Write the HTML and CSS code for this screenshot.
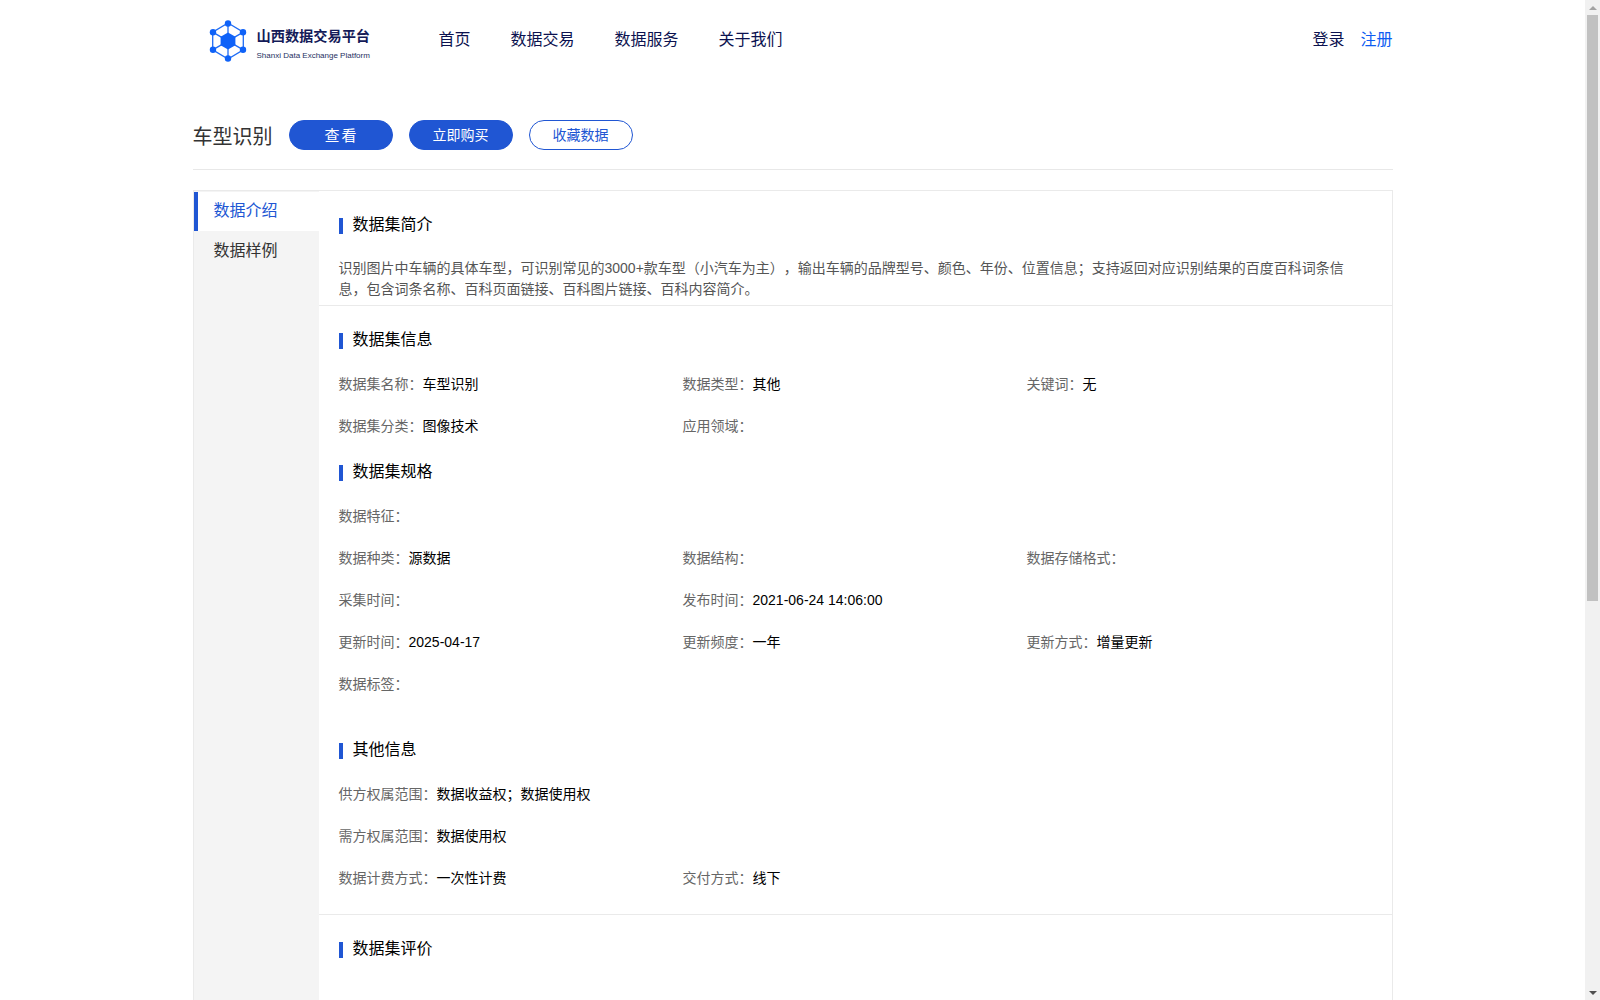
FILE: index.html
```html
<!DOCTYPE html>
<html lang="zh-CN">
<head>
<meta charset="utf-8">
<title>车型识别 - 山西数据交易平台</title>
<link rel="stylesheet" href="styles.css">
</head>
<body>
<div class="viewport">
<div class="page">
  <header class="topbar">
    <a class="logo">
      <svg class="logo-mark" viewBox="0 0 40 44" width="40" height="44" aria-hidden="true">
        <g fill="none" stroke="#1f6cf5" stroke-width="1.3">
          <path d="M20 4 L35.3 13.1 V30.9 L20 40 L4.7 30.9 V13.1 Z"/>
          <path d="M20 4 V40 M4.7 13.1 L35.3 30.9 M35.3 13.1 L4.7 30.9"/>
        </g>
        <g fill="#0f62f8">
          <path d="M20 13.5 L27.4 17.8 V26.2 L20 30.5 L12.6 26.2 V17.8 Z"/>
          <circle cx="20" cy="4.5" r="3.2"/>
          <circle cx="35" cy="13.2" r="3.2"/>
          <circle cx="35" cy="30.8" r="3.2"/>
          <circle cx="20" cy="39.5" r="3.2"/>
          <circle cx="5" cy="30.8" r="3.2"/>
          <circle cx="5" cy="13.2" r="3.2"/>
        </g>
      </svg>
      <span class="logo-text">
        <strong class="logo-cn">山西数据交易平台</strong>
        <span class="logo-en">Shanxi Data Exchange Platform</span>
      </span>
    </a>
    <nav class="nav">
      <a>首页</a>
      <a>数据交易</a>
      <a>数据服务</a>
      <a>关于我们</a>
    </nav>
    <div class="auth">
      <a>登录</a>
      <a class="auth-reg">注册</a>
    </div>
  </header>

  <div class="title-row">
    <h1 class="title">车型识别</h1>
    <button class="btn btn-fill btn-view">查看</button>
    <button class="btn btn-fill">立即购买</button>
    <button class="btn btn-line">收藏数据</button>
  </div>

  <div class="panel">
    <aside class="side">
      <a class="side-item active">数据介绍</a>
      <a class="side-item">数据样例</a>
    </aside>
    <main class="content">
      <section class="sec">
        <h2 class="sec-title">数据集简介</h2>
        <p class="intro">识别图片中车辆的具体车型，可识别常见的3000+款车型（小汽车为主），输出车辆的品牌型号、颜色、年份、位置信息；支持返回对应识别结果的百度百科词条信息，包含词条名称、百科页面链接、百科图片链接、百科内容简介。</p>
      </section>

      <section class="sec sec-info">
        <h2 class="sec-title">数据集信息</h2>
        <div class="grid">
          <div class="cell"><span class="k">数据集名称：</span>车型识别</div>
          <div class="cell"><span class="k">数据类型：</span>其他</div>
          <div class="cell"><span class="k">关键词：</span>无</div>
          <div class="cell"><span class="k">数据集分类：</span>图像技术</div>
          <div class="cell"><span class="k">应用领域：</span></div>
        </div>

        <h2 class="sec-title sec-title-next">数据集规格</h2>
        <div class="grid">
          <div class="cell cell-full"><span class="k">数据特征：</span></div>
          <div class="cell"><span class="k">数据种类：</span>源数据</div>
          <div class="cell"><span class="k">数据结构：</span></div>
          <div class="cell"><span class="k">数据存储格式：</span></div>
          <div class="cell"><span class="k">采集时间：</span></div>
          <div class="cell"><span class="k">发布时间：</span>2021-06-24 14:06:00</div>
          <div class="cell"></div>
          <div class="cell"><span class="k">更新时间：</span>2025-04-17</div>
          <div class="cell"><span class="k">更新频度：</span>一年</div>
          <div class="cell"><span class="k">更新方式：</span>增量更新</div>
          <div class="cell cell-full"><span class="k">数据标签：</span></div>
        </div>

        <h2 class="sec-title sec-title-other">其他信息</h2>
        <div class="grid">
          <div class="cell cell-full"><span class="k">供方权属范围：</span>数据收益权；数据使用权</div>
          <div class="cell cell-full"><span class="k">需方权属范围：</span>数据使用权</div>
          <div class="cell"><span class="k">数据计费方式：</span>一次性计费</div>
          <div class="cell"><span class="k">交付方式：</span>线下</div>
        </div>
      </section>

      <section class="sec sec-last">
        <h2 class="sec-title">数据集评价</h2>
      </section>
    </main>
  </div>
</div>
</div>
<div class="scrollbar" aria-hidden="true">
  <div class="sb-btn"><span class="sb-arrow-up"></span></div>
  <div class="sb-thumb"></div>
  <div class="sb-btn sb-btn-end"><span class="sb-arrow-down"></span></div>
</div>
</body>
</html>
```

FILE: styles.css
```css
* { box-sizing: border-box; }
html, body { margin: 0; padding: 0; height: 100%; overflow: hidden; background: #fff; }
body {
  display: flex;
  font-family: "Liberation Sans", "Noto Sans CJK SC", sans-serif;
  font-size: 14px;
  color: #000;
  text-spacing-trim: space-all;
}
a { text-decoration: none; color: inherit; cursor: pointer; }

.viewport { flex: 1; min-width: 0; height: 100vh; overflow: hidden; }

.scrollbar { width: 15px; flex: none; height: 100vh; background: #f1f1f1; display: flex; flex-direction: column; align-items: center; }
.sb-btn { width: 15px; height: 15px; flex: none; display: flex; align-items: center; justify-content: center; }
.sb-btn-end { margin-top: auto; }
.sb-arrow-up { width: 0; height: 0; border-left: 4px solid transparent; border-right: 4px solid transparent; border-bottom: 4px solid #a3a3a3; }
.sb-arrow-down { width: 0; height: 0; border-left: 4px solid transparent; border-right: 4px solid transparent; border-top: 4px solid #505050; }
.sb-thumb { width: 11px; height: 586px; background: #c1c1c1; }

.page { width: 1200px; margin: 0 auto; height: 1655px; display: flex; flex-direction: column; }

.topbar { height: 78px; display: flex; align-items: center; color: #0c1250; }
.logo { width: 246px; display: flex; align-items: center; padding-left: 15px; gap: 9px; }
.logo-mark { display: block; flex: none; margin-top: 4px; }
.logo-text { display: flex; flex-direction: column; padding-top: 9px; }
.logo-cn { font-size: 14.2px; line-height: 20px; color: #141b58; font-weight: 700; white-space: nowrap; }
.logo-en { font-size: 8px; line-height: 12px; color: #26305f; margin-top: 4px; white-space: nowrap; }
.nav { display: flex; gap: 40px; font-size: 16px; padding-bottom: 2px; }
.auth { margin-left: auto; display: flex; gap: 16px; font-size: 16px; padding-bottom: 2px; }
.auth-reg { color: #0d5cf2; }

.title-row {
  display: flex;
  align-items: center;
  padding-top: 42px;
  padding-bottom: 19px;
  border-bottom: 1px solid #e8e8e8;
  gap: 16px;
}
.title { margin: 0; width: 80px; height: 30px; font-size: 20px; line-height: 34px; font-weight: 400; color: #333; }
.btn {
  width: 104px;
  height: 30px;
  border-radius: 15px;
  border: 1px solid #2056d3;
  font: inherit;
  font-size: 14px;
  padding: 0 0 2px;
  cursor: pointer;
}
.btn-fill { background: #2056d3; color: #fff; }
.btn-view { font-size: 15px; letter-spacing: 2px; padding-left: 2px; }
.btn-line { background: #fff; color: #2056d3; }

.panel {
  flex: 1;
  margin-top: 20px;
  display: flex;
  border: 1px solid #eaeaea;
  border-bottom: 0;
}
.side { width: 125px; flex: none; background: #f4f4f4; padding-top: 1px; }
.side-item { display: block; height: 39px; line-height: 39px; padding-left: 16px; font-size: 16px; color: #333; border-left: 4px solid transparent; }
.side-item.active { line-height: 38px; background: #fff; color: #2056d3; border-left-color: #2056d3; }

.content { flex: 1; min-width: 0; }
.sec { padding: 23px 20px 5px 20px; border-bottom: 1px solid #eaeaea; }
.sec-info { padding-bottom: 14px; }
.sec-last { border-bottom: 0; }
.sec-title {
  margin: 0;
  display: flex;
  align-items: flex-start;
  gap: 10px;
  height: 20px;
  font-size: 16px;
  line-height: 21px;
  font-weight: 400;
  color: #000;
}
.sec-title::before { content: ""; align-self: flex-end; width: 4px; height: 16px; background: #2056d3; flex: none; }
.sec-title-next { margin-top: 13px; }
.sec-title-other { margin-top: 33px; }

.intro { margin: 23.5px 0 0; width: 1012px; font-size: 14px; line-height: 21px; color: #555; }

.grid { margin-top: 15px; display: grid; grid-template-columns: 344px 344px 1fr; grid-auto-rows: 42px; }
.cell { line-height: 40px; white-space: nowrap; color: #000; }
.cell-full { grid-column: 1 / -1; }
.k { color: #666; }
```
